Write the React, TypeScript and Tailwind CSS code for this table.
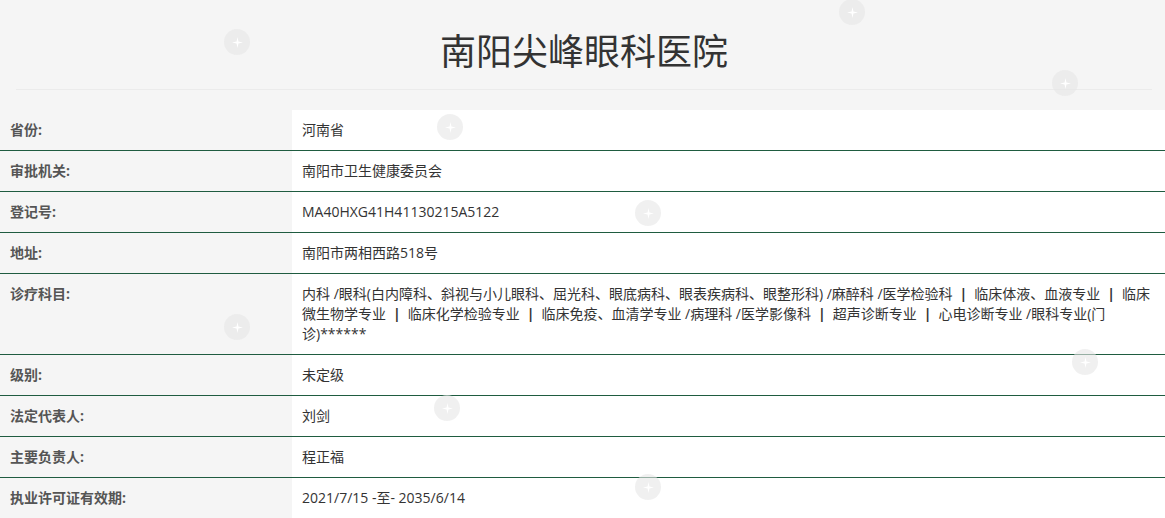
import React from 'react';

const FONT = "font-['Open_Sans','Noto_Sans_CJK_SC',sans-serif]";

const Sep = () => <b className="mx-[7px] font-bold text-[#333]">|</b>;

const rows: { label: string; value: React.ReactNode }[] = [
  { label: '省份:', value: '河南省' },
  { label: '审批机关:', value: '南阳市卫生健康委员会' },
  { label: '登记号:', value: 'MA40HXG41H41130215A5122' },
  { label: '地址:', value: '南阳市两相西路518号' },
  {
    label: '诊疗科目:',
    value: (
      <>
        内科 /眼科(白内障科、斜视与小儿眼科、屈光科、眼底病科、眼表疾病科、眼整形科) /麻醉科 /医学检验科<Sep />临床体液、血液专业<Sep />临床微生物学专业<Sep />临床化学检验专业<Sep />临床免疫、血清学专业 /病理科 /医学影像科<Sep />超声诊断专业<Sep />心电诊断专业 /眼科专业(门诊)******
      </>
    ),
  },
  { label: '级别:', value: '未定级' },
  { label: '法定代表人:', value: '刘剑' },
  { label: '主要负责人:', value: '程正福' },
  { label: '执业许可证有效期:', value: '2021/7/15 -至- 2035/6/14' },
];

const marks = [
  [237, 42], [852, 12], [1065, 83], [450, 127], [648, 213],
  [237, 327], [1085, 362], [447, 408], [648, 487],
];

const Mark = ({ x, y }: { x: number; y: number }) => (
  <div
    className="absolute w-[26px] h-[26px] rounded-full bg-[#e6e6e6]/60 flex items-center justify-center pointer-events-none"
    style={{ left: x - 13, top: y - 13 }}
  >
    <svg width="11" height="11" viewBox="0 0 12 12">
      <path d="M6 0 L7 5 L12 6 L7 7 L6 12 L5 7 L0 6 L5 5 Z" fill="#ffffff" />
    </svg>
  </div>
);

export default function App() {
  return (
    <div className={`relative w-[1165px] h-[518px] overflow-hidden bg-[#f5f5f5] ${FONT}`}>
      <div className="pl-4 pr-[13px] pt-[27px]">
        <h1 className="text-center text-[36px] leading-[50px] text-[#333] font-normal">南阳尖峰眼科医院</h1>
        <div className="mt-[12px] h-px bg-[#ebebeb]" />
      </div>
      <div className="mt-[20px]">
        {rows.map((r, i) => (
          <div key={i} className="flex border-b border-[#1f5c40]">
            <div className="w-[292px] shrink-0 p-[10px] text-[14px] leading-[20px] font-bold text-[#555]">
              {r.label}
            </div>
            <div className="flex-1 bg-white p-[10px] text-[14px] leading-[20px] text-[#333]">
              {r.value}
            </div>
          </div>
        ))}
      </div>
      {marks.map(([x, y], i) => (
        <Mark key={i} x={x} y={y} />
      ))}
    </div>
  );
}
